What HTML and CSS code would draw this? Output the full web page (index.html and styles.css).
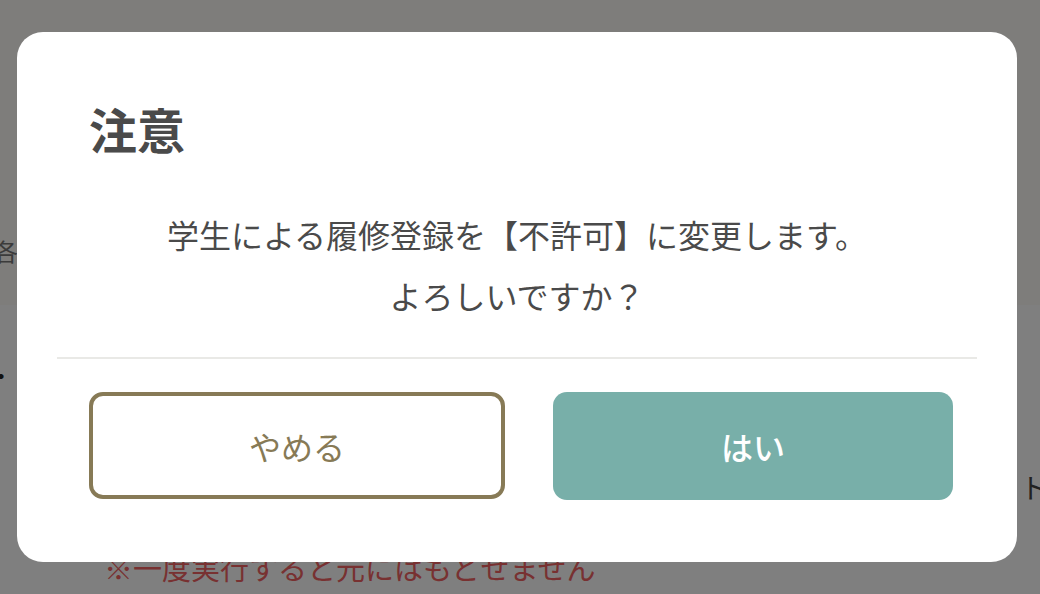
FILE: index.html
```html
<!DOCTYPE html>
<html lang="ja">
<head>
<meta charset="utf-8">
<title>注意</title>
<link rel="stylesheet" href="styles.css">
</head>
<body>
<div class="page">
  <header class="page-head">
    <span class="head-text">各</span>
  </header>
  <main class="page-body">
    <div class="bullet">・</div>
    <div class="side-text">ト</div>
    <p class="warning">※一度実行すると元にはもどせません</p>
  </main>
</div>

<div class="overlay">
  <div class="modal" role="dialog" aria-labelledby="modal-title">
    <h2 class="modal-title" id="modal-title">注意</h2>
    <div class="modal-message">
      <p>学生による履修登録を【不許可】に変更します。</p>
      <p>よろしいですか？</p>
    </div>
    <hr class="modal-divider">
    <div class="modal-actions">
      <button class="btn btn-cancel" type="button">やめる</button>
      <button class="btn btn-ok" type="button">はい</button>
    </div>
  </div>
</div>
</body>
</html>
```

FILE: styles.css
```css
html, body {
  margin: 0;
  padding: 0;
}

body {
  width: 1040px;
  height: 594px;
  overflow: hidden;
  font-family: "Noto Sans CJK JP", "Noto Sans", sans-serif;
  background: #ffffff;
}

.page {
  display: flex;
  flex-direction: column;
  height: 594px;
}

.page-head {
  height: 305px;
  box-sizing: border-box;
  background: #fcfbf7;
  padding-top: 236px;
}

.head-text {
  display: block;
  margin-left: -6px;
  font-size: 24px;
  line-height: 30px;
  color: #777777;
}

.page-body {
  flex: 1;
  display: flex;
  flex-direction: column;
  background: #ffffff;
}

.bullet {
  margin-top: 58px;
  margin-left: -11px;
  font-size: 24px;
  line-height: 24px;
  color: #222222;
}

.side-text {
  margin-top: 86px;
  margin-right: -8px;
  text-align: right;
  font-size: 28px;
  line-height: 28px;
  color: #444444;
}

.warning {
  margin: 50px 0 0;
  padding-left: 104px;
  font-size: 29px;
  line-height: 32px;
  color: #f06262;
}

.overlay {
  position: fixed;
  inset: 0;
  background: rgba(0, 0, 0, 0.5);
  display: flex;
  justify-content: flex-start;
  align-items: flex-start;
  padding: 32px 0 0 17px;
}

.modal {
  width: 1000px;
  height: 530px;
  box-sizing: border-box;
  background: #ffffff;
  border-radius: 26px;
  padding-top: 72px;
  display: flex;
  flex-direction: column;
}

.modal-title {
  margin: 0;
  padding-left: 72px;
  font-size: 48px;
  line-height: 48px;
  font-weight: 700;
  color: #4a4a4a;
}

.modal-message {
  margin-top: 52px;
  text-align: center;
  font-size: 32px;
  line-height: 61px;
  color: #4a4a4a;
}

.modal-message p {
  margin: 0;
}

.modal-divider {
  margin: 31px 40px 0;
  height: 2px;
  border: 0;
  background: #e9e9e6;
}

.modal-actions {
  margin-top: 33px;
  padding-left: 72px;
  display: flex;
  align-items: flex-start;
  gap: 48px;
}

.btn {
  font-family: inherit;
  font-size: 32px;
  box-sizing: border-box;
  border-radius: 14px;
  cursor: pointer;
  padding: 0;
}

.btn-cancel {
  width: 416px;
  height: 107px;
  background: #ffffff;
  border: 4px solid #877a56;
  color: #877a56;
  font-weight: 400;
}

.btn-ok {
  width: 400px;
  height: 108px;
  background: #78afa9;
  border: 0;
  color: #ffffff;
  font-weight: 500;
}
```
